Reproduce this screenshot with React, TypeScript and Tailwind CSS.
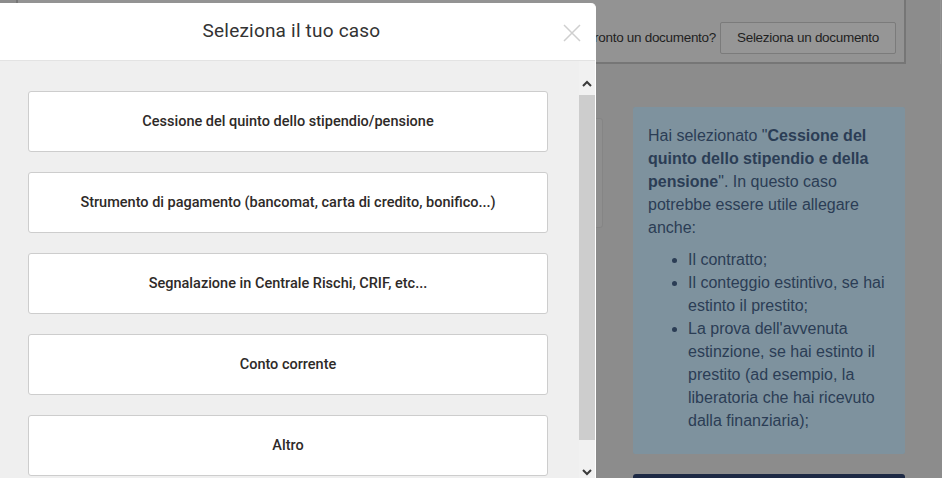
import React from 'react';

const options = [
    'Cessione del quinto dello stipendio/pensione',
    'Strumento di pagamento (bancomat, carta di credito, bonifico...)',
    'Segnalazione in Centrale Rischi, CRIF, etc...',
    'Conto corrente',
    'Altro',
];

function Chevron({ down = false }: { down?: boolean }) {
    return (
        <svg width="10" height="7" viewBox="0 0 10 7" className={down ? 'rotate-180' : ''}>
            <path d="M1 6 L5 2 L9 6" fill="none" stroke="#3a3a3a" strokeWidth="2" />
        </svg>
    );
}

export default function App() {
    return (
        <div className="relative w-[942px] h-[478px] overflow-hidden bg-[#8c8c8c] font-['Liberation_Sans',Arial,sans-serif]">
            {/* Background page */}
            <div className="flex">
                <div className="pl-[16px]">
                    <div className="w-[890px] h-[66px] -mt-[2px] border-2 border-[#767676] bg-[#939393] flex items-center justify-end pr-[8px] pt-[14px]">
                        <span className="text-[13.5px] text-[#1f1f1f] mr-[4px] tracking-[-0.3px]">Hai già pronto un documento?</span>
                        <div className="h-[32px] px-[16px] border border-[#7b7b7b] rounded-[2px] bg-[#969696] text-[13.5px] tracking-[-0.3px] text-[#1f1f1f] flex items-center">
                            Seleziona un documento
                        </div>
                    </div>
                </div>
                <div className="flex-1 border-l border-[#959595] ml-[34px]" />
            </div>

            <div className="flex pl-[16px]">
                <div className="w-[587px] pt-[54px]">
                    <div className="h-[110px] border border-[#858585] rounded-[3px] bg-[#8f8f8f]" />
                </div>
                <div className="w-[272px] ml-[30px] pt-[43px]">
                    <div className="bg-[#7e929e] rounded-[2px] pt-[17px] pb-[22px] pl-[15px] pr-[12px] text-[16px] leading-[23px] text-[#2b3d55]">
                        <p>
                            Hai selezionato "<b>Cessione del quinto dello stipendio e della pensione</b>". In questo caso potrebbe essere utile allegare anche:
                        </p>
                        <ul className="list-disc pl-[40px] mt-[9px]">
                            <li>Il contratto;</li>
                            <li>Il conteggio estintivo, se hai estinto il prestito;</li>
                            <li>La prova dell'avvenuta estinzione, se hai estinto il prestito (ad esempio, la liberatoria che hai ricevuto dalla finanziaria);</li>
                        </ul>
                    </div>
                    <div className="mt-[20px] h-[10px] rounded-t-[3px] bg-[#1d2944]" />
                </div>
            </div>

            {/* Modal */}
            <div className="absolute left-0 top-[3px] w-[596px] h-[490px] bg-white rounded-tr-[5px] flex flex-col border-r border-white">
                <div className="h-[58px] shrink-0 border-b border-[#e3e3e3] flex items-center justify-center pr-[12px] relative">
                    <h2 className="text-[19px] text-[#333] font-['Roboto',sans-serif] tracking-[0.2px]">Seleziona il tuo caso</h2>
                    <svg className="absolute right-[14px] top-[21px]" width="18" height="18" viewBox="0 0 18 18">
                        <path d="M1 1 L17 17 M17 1 L1 17" stroke="#cfcfcf" strokeWidth="1.5" />
                    </svg>
                </div>
                <div className="flex-1 flex bg-[#efefef]">
                    <div className="flex-1 pl-[28px] pr-[31px] pt-[30px] flex flex-col gap-[20px]">
                        {options.map((o) => (
                            <div
                                key={o}
                                className="h-[61px] shrink-0 bg-white border border-[#cdcdcd] rounded-[3px] flex items-center justify-center text-[14.5px] font-medium text-[#2e2a28] font-['Roboto',sans-serif]"
                            >
                                {o}
                            </div>
                        ))}
                    </div>
                    <div className="w-[16px] flex flex-col bg-[#f1f1f1]">
                        <div className="h-[34px] flex items-end justify-center pb-[8px]">
                            <Chevron />
                        </div>
                        <div className="h-[345px] bg-[#cdcdcd]" />
                        <div className="h-[29px]" />
                        <div className="flex justify-center">
                            <Chevron down />
                        </div>
                    </div>
                </div>
            </div>
        </div>
    );
}
